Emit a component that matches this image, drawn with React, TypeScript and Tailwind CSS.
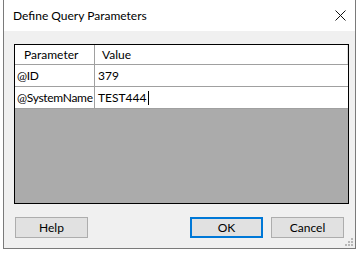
import React from "react";

const font = { fontFamily: 'Lato, "Noto Sans", sans-serif' };

const Row = ({ name, value, caret }: { name: string; value: string; caret?: boolean }) => (
  <div className="flex h-[22px] border-b border-[#a0a0a0] bg-white">
    <div className="flex w-[80px] items-center whitespace-nowrap border-r border-[#a0a0a0] pl-[2px] tracking-[-0.3px]">{name}</div>
    <div className="flex flex-1 items-center pl-[3px]">
      {value}
      {caret && <span className="ml-[1px] inline-block h-[14px] w-px bg-black" />}
    </div>
  </div>
);

const Btn = ({ label, primary }: { label: string; primary?: boolean }) => (
  <div
    className={
      "flex h-[21px] w-[73px] items-center justify-center bg-[#e1e1e1] text-black " +
      (primary ? "border-2 border-[#0078d7]" : "border border-[#adadad]")
    }
  >
    {label}
  </div>
);

export default function App() {
  return (
    <div className="h-[253px] w-[361px] overflow-hidden bg-white text-[12px] text-black" style={font}>
      <div className="ml-[3px] flex h-[249px] w-[353px] flex-col border-x border-b border-[#7a7a7a] bg-[#f0f0f0]">
        {/* title bar */}
        <div className="flex h-[31px] items-center justify-between bg-white pl-[9px] pr-[8px]">
          <span className="text-[12px]">Define Query Parameters</span>
          <svg width="11" height="11" viewBox="0 0 11 11" className="mr-[1px]">
            <path d="M0.5 0.5 L10.5 10.5 M10.5 0.5 L0.5 10.5" stroke="#111" strokeWidth="1" />
          </svg>
        </div>

        {/* grid */}
        <div className="ml-[10px] mt-[13px] flex h-[160px] w-[335px] flex-col border border-black bg-[#ababab]">
          <div className="flex h-[20px] border-b border-[#a0a0a0] bg-white">
            <div className="flex w-[80px] items-center border-r border-[#a0a0a0] pl-[9px]">Parameter</div>
            <div className="flex flex-1 items-center border-r border-[#e0e0e0] pl-[7px]">Value</div>
          </div>
          <Row name="@ID" value="379" />
          <Row name="@SystemName" value="TEST444" caret />
        </div>

        {/* buttons */}
        <div className="relative mt-[13px] flex px-[11px]">
          <Btn label="Help" />
          <div className="ml-auto flex gap-[8px]">
            <Btn label="OK" primary />
            <Btn label="Cancel" />
          </div>
        </div>
        <div className="mt-auto flex justify-end pb-[2px] pr-[2px]">
          <svg width="8" height="8" viewBox="0 0 8 8">
            <rect x="6" y="0" width="2" height="2" fill="#b8b8b8" />
            <rect x="3" y="3" width="2" height="2" fill="#b8b8b8" />
            <rect x="6" y="3" width="2" height="2" fill="#b8b8b8" />
            <rect x="0" y="6" width="2" height="2" fill="#b8b8b8" />
            <rect x="3" y="6" width="2" height="2" fill="#b8b8b8" />
            <rect x="6" y="6" width="2" height="2" fill="#b8b8b8" />
          </svg>
        </div>
      </div>
    </div>
  );
}
